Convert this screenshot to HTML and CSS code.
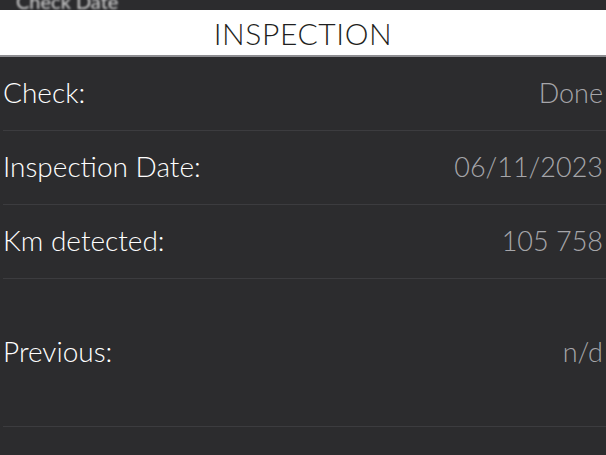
FILE: index.html
```html
<!DOCTYPE html>
<html>
<head>
<meta charset="utf-8">
<link rel="stylesheet" href="styles.css">
</head>
<body>
<div class="screen">
  <div class="topstrip"><span class="ghost">Check Date</span></div>
  <header class="title">INSPECTION</header>
  <div class="list">
    <div class="row"><span class="label">Check:</span><span class="value">Done</span></div>
    <div class="row"><span class="label">Inspection Date:</span><span class="value">06/11/2023</span></div>
    <div class="row"><span class="label">Km detected:</span><span class="value">105 758</span></div>
    <div class="row tall"><span class="label">Previous:</span><span class="value">n/d</span></div>
  </div>
</div>
</body>
</html>
```

FILE: styles.css
```css
html, body {
  margin: 0;
  padding: 0;
  background: #2c2c2e;
}
.screen {
  width: 606px;
  height: 455px;
  overflow: hidden;
  background: #2c2c2e;
  font-family: "Lato", "Noto Sans", sans-serif;
}
.topstrip {
  height: 10px;
  overflow: hidden;
  padding-left: 16px;
}
.ghost {
  display: block;
  margin-top: -9px;
  font-size: 20px;
  color: rgba(255,255,255,0.8);
  filter: blur(1px);
  line-height: 20px;
}
.title {
  background: #ffffff;
  height: 45px;
  border-bottom: 2px solid #8e8e92;
  display: flex;
  align-items: center;
  justify-content: center;
  font-size: 30px;
  font-weight: 300;
  color: #1f1f21;
  letter-spacing: 0.6px;
}
.list {
  display: flex;
  flex-direction: column;
}
.row {
  height: 70px;
  padding-bottom: 3px;
  margin-left: 3px;
  border-bottom: 1px solid #3c3c3f;
  display: flex;
  align-items: center;
  justify-content: space-between;
  padding-right: 3px;
  font-weight: 300;
}
.row.tall {
  height: 144px;
}
.label {
  color: #ffffff;
  font-size: 28px;
}
.value {
  color: #a6a6aa;
  font-size: 27px;
}
```
